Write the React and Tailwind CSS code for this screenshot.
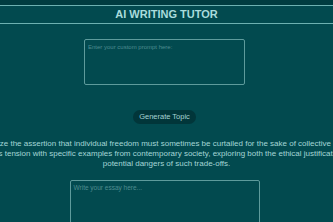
export default function App() {
  const lines = [
    'Analyze the assertion that individual freedom must sometimes be curtailed for the sake of collective good.',
    'Examine this tension with specific examples from contemporary society, exploring both the ethical justifications and the',
    'potential dangers of such trade-offs.',
  ];

  return (
    <div
      className="w-[333px] h-[222px] overflow-hidden bg-[#024a4f]"
      style={{ fontFamily: '"Liberation Sans", Arial, sans-serif' }}
    >
      <div className="h-[5px] bg-[#003c40]" />
      <header className="h-[19px] border-y border-[#6db1b1] bg-[#024a4f] flex items-center justify-center">
        <h1 className="text-[11px] leading-none font-bold text-[#a9dcdc]">AI WRITING TUTOR</h1>
      </header>

      <div className="w-[329px] flex flex-col items-center">
        <textarea
          className="mt-[15px] w-[161px] h-[46px] resize-none rounded-[2px] border border-[#5e9b9c] bg-transparent px-[3px] py-[3px] text-[6px] leading-[8px] text-[#a9dcdc] placeholder:text-[#4f8d8f] outline-none"
          placeholder="Enter your custom prompt here:"
        />

        <button
          type="button"
          className="mt-[25px] h-[14px] w-[63px] rounded-full bg-[#01363a] text-[7.5px] leading-none text-[#a6d3d3]"
        >
          Generate Topic
        </button>
      </div>

      <div className="mt-[15px] w-[333px] flex flex-col items-center">
        {lines.map((l) => (
          <p key={l} className="whitespace-nowrap text-[8px] leading-[10px] text-[#a4d6d6]">
            {l}
          </p>
        ))}
      </div>

      <div className="w-[329px] flex flex-col items-center">
        <textarea
          className="mt-[11px] w-[190px] h-[80px] resize-none rounded-[2px] border border-[#5e9b9c] bg-transparent px-[3px] py-[3px] text-[6.5px] leading-[8px] text-[#a9dcdc] placeholder:text-[#4f8d8f] outline-none"
          placeholder="Write your essay here..."
        />
      </div>
    </div>
  );
}
